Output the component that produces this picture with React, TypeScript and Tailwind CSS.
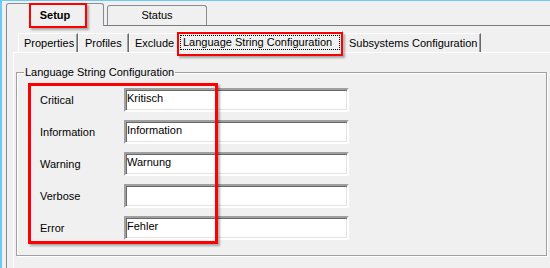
import React from "react";

const rows: { label: string; value: string }[] = [
  { label: "Critical", value: "Kritisch" },
  { label: "Information", value: "Information" },
  { label: "Warning", value: "Warnung" },
  { label: "Verbose", value: "" },
  { label: "Error", value: "Fehler" },
];

export default function App() {
  return (
    <div className="relative flex flex-col w-[550px] h-[268px] overflow-hidden bg-[#f0f0f0] border-l-2 border-t border-[#6ccbf2] text-[11px] leading-[13px] text-black font-['Liberation_Sans',Arial,sans-serif]">
      {/* outer tabs */}
      <div className="flex items-end h-[24px] pl-[4px] gap-[3px] shrink-0">
        <div className="relative z-10 -mb-px w-[98px] h-[23px] border border-b-0 border-[#898c95] rounded-t-[3px] bg-[#f0f0f0] text-center pt-[5px] font-bold">
          Setup
        </div>
        <div className="w-[100px] h-[20px] border border-b-0 border-[#898c95] rounded-t-[3px] bg-[#f0f0f0] text-center pt-[3px]">
          Status
        </div>
      </div>
      {/* outer panel */}
      <div className="flex-1 ml-[4px] border-t border-l border-t-[#7a7a7a] border-l-[#898c95] pl-[6px] pt-[5px] flex flex-col">
        {/* inner tabs */}
        <div className="flex items-end h-[21px] pl-[5px] shrink-0">
          <div className="w-[60px] h-[19px] border-t border-l border-white border-r border-r-[#696969] shadow-[inset_-1px_0_0_#a0a0a0] pl-[5px] pt-[3px]">
            Properties
          </div>
          <div className="w-[51px] h-[19px] border-t border-l border-white border-r border-r-[#696969] shadow-[inset_-1px_0_0_#a0a0a0] pl-[6px] pt-[3px]">
            Profiles
          </div>
          <div className="w-[48px] h-[19px] border-t border-l border-white pl-[5px] pt-[3px]">
            Exclude
          </div>
          <div className="relative z-10 -mb-px w-[166px] h-[22px] border-t border-l border-white border-r border-r-[#696969] shadow-[inset_-1px_0_0_#a0a0a0] bg-[#f0f0f0] px-[2px] pt-[3px]">
            <div className="h-[15px] border border-dotted border-black pl-[2px] whitespace-nowrap">
              Language String Configuration
            </div>
          </div>
          <div className="w-[138px] h-[19px] border-t border-l border-white border-r border-r-[#696969] shadow-[inset_-1px_0_0_#a0a0a0] pl-[5px] pt-[3px] whitespace-nowrap">
            Subsystems Configuration
          </div>
        </div>
        {/* inner panel */}
        <div className="flex-1 border-t border-l border-white pl-[2px]">
          <div className="relative mt-[19px] w-[531px] h-[184px] border border-[#a0a0a0] shadow-[1px_1px_0_#ffffff,inset_1px_1px_0_#ffffff] pt-[15px] pl-[23px]">
            <div className="absolute -top-[7px] left-[7px] px-[1px] bg-[#f0f0f0] whitespace-nowrap">
              Language String Configuration
            </div>
            <div className="flex flex-col gap-[8px]">
              {rows.map((r) => (
                <div key={r.label} className="flex items-center h-[24px]">
                  <div className="w-[84px]">{r.label}</div>
                  <div className="w-[225px] h-[24px] bg-white border-2 border-t-[#a0a0a0] border-l-[#a0a0a0] border-r-white border-b-white shadow-[inset_1px_1px_0_#696969,inset_-1px_-1px_0_#e3e3e3] pl-[1px] pt-[2px]">
                    {r.value}
                  </div>
                </div>
              ))}
            </div>
          </div>
        </div>
      </div>

      {/* red annotation boxes */}
      <div className="absolute z-20 left-[27px] top-[2px] w-[58px] h-[25px] border-2 border-[#ff0000] shadow-[2px_2px_2px_rgba(0,0,0,0.3)] pointer-events-none" />
      <div className="absolute z-20 left-[175px] top-[31px] w-[166px] h-[24px] border-2 border-[#ff0000] shadow-[2px_2px_2px_rgba(0,0,0,0.3)] pointer-events-none" />
      <div className="absolute z-20 left-[26px] top-[82px] w-[190px] h-[161px] border-[3px] border-[#ff0000] shadow-[2px_2px_2px_rgba(0,0,0,0.3)] pointer-events-none" />
    </div>
  );
}
